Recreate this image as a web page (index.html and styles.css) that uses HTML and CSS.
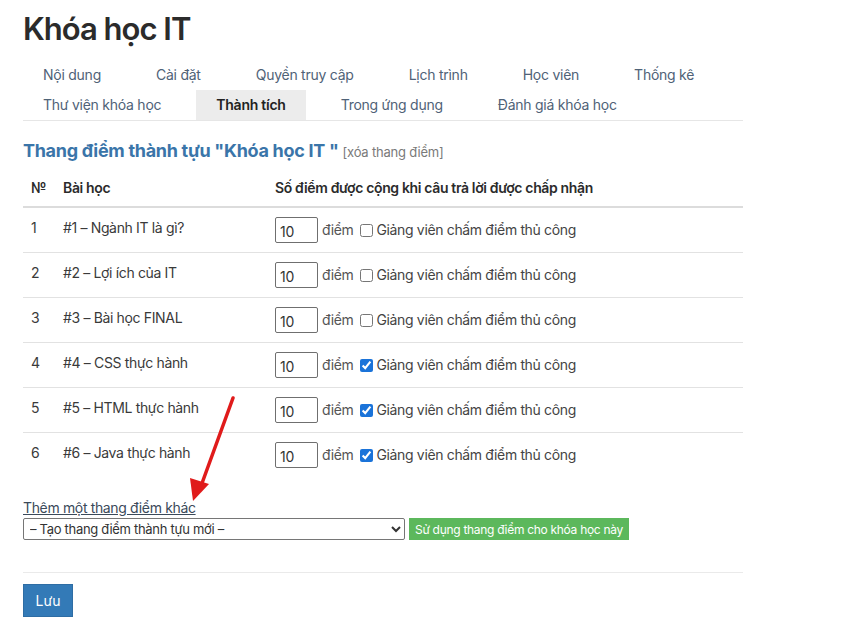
FILE: index.html
```html
<!DOCTYPE html>
<html lang="vi">
<head>
<meta charset="utf-8">
<title>Khóa học IT</title>
<link rel="stylesheet" href="styles.css">
</head>
<body>
<div class="page">
  <h1 class="title">Khóa học IT</h1>
  <nav class="tabs">
    <a class="tab">Nội dung</a>
    <a class="tab">Cài đặt</a>
    <a class="tab">Quyền truy cập</a>
    <a class="tab">Lịch trình</a>
    <a class="tab">Học viên</a>
    <a class="tab">Thống kê</a>
    <a class="tab">Thư viện khóa học</a>
    <a class="tab active">Thành tích</a>
    <a class="tab">Trong ứng dụng</a>
    <a class="tab">Đánh giá khóa học</a>
  </nav>

  <h2 class="heading">Thang điểm thành tựu "Khóa học IT " <span class="del">[xóa thang điểm]</span></h2>

  <table class="grid">
    <thead>
      <tr><th class="c-no">№</th><th class="c-lesson">Bài học</th><th>Số điểm được cộng khi câu trả lời được chấp nhận</th></tr>
    </thead>
    <tbody>
      <tr><td>1</td><td>#1 – Ngành IT là gì?</td><td><div class="pts"><input class="num" type="text" value="10"><span class="unit">điểm</span><label class="chk"><input type="checkbox">Giảng viên chấm điểm thủ công</label></div></td></tr>
      <tr><td>2</td><td>#2 – Lợi ích của IT</td><td><div class="pts"><input class="num" type="text" value="10"><span class="unit">điểm</span><label class="chk"><input type="checkbox">Giảng viên chấm điểm thủ công</label></div></td></tr>
      <tr><td>3</td><td>#3 – Bài học FINAL</td><td><div class="pts"><input class="num" type="text" value="10"><span class="unit">điểm</span><label class="chk"><input type="checkbox">Giảng viên chấm điểm thủ công</label></div></td></tr>
      <tr><td>4</td><td>#4 – CSS thực hành</td><td><div class="pts"><input class="num" type="text" value="10"><span class="unit">điểm</span><label class="chk"><input type="checkbox" checked>Giảng viên chấm điểm thủ công</label></div></td></tr>
      <tr><td>5</td><td>#5 – HTML thực hành</td><td><div class="pts"><input class="num" type="text" value="10"><span class="unit">điểm</span><label class="chk"><input type="checkbox" checked>Giảng viên chấm điểm thủ công</label></div></td></tr>
      <tr class="last"><td>6</td><td>#6 – Java thực hành</td><td><div class="pts"><input class="num" type="text" value="10"><span class="unit">điểm</span><label class="chk"><input type="checkbox" checked>Giảng viên chấm điểm thủ công</label></div></td></tr>
    </tbody>
  </table>

  <div class="other">
    <a class="other-link" href="#">Thêm một thang điểm khác</a>
    <div class="other-row">
      <select class="sel"><option>– Tạo thang điểm thành tựu mới –</option></select>
      <button class="btn-green" type="button">Sử dụng thang điểm cho khóa học này</button>
    </div>
  </div>

  <div class="footer">
    <button class="btn-save" type="button">Lưu</button>
  </div>

  <svg class="arrow" width="80" height="120" viewBox="0 0 80 120">
    <line x1="68" y1="2" x2="36" y2="90" stroke="#e01b1b" stroke-width="3.5" stroke-linecap="round"/>
    <polygon points="28,105 25,82 44,88" fill="#e01b1b"/>
  </svg>
</div>
</body>
</html>
```
FILE: styles.css
```css
* { box-sizing: border-box; }
html, body { margin: 0; padding: 0; background: #fff; }
body {
  font-family: Inter, "Noto Sans", "DejaVu Sans", sans-serif;
  font-size: 14px;
  color: #333;
  letter-spacing: -0.35px;
}
.page {
  position: relative;
  width: 720px;
  margin-left: 23px;
  padding-top: 10px;
}
.title {
  margin: 0;
  font-size: 31px;
  font-weight: 600;
  line-height: 38px;
  color: #2b2b2b;
  letter-spacing: -1px;
}
.tabs {
  display: flex;
  flex-wrap: wrap;
  margin-top: 12px;
  border-bottom: 1px solid #e6e6e6;
}
.tab {
  display: block;
  padding: 0 20px;
  margin-right: 15px;
  height: 30px;
  line-height: 30px;
  color: #4f6277;
  font-size: 14px;
  letter-spacing: -0.25px;
}
.tab.active {
  background: #ececec;
  color: #222;
  font-weight: 600;
}
.heading {
  margin: 19px 0 0;
  font-size: 18px;
  font-weight: 700;
  line-height: 22px;
  color: #3a75a9;
  letter-spacing: -0.3px;
}
.del {
  font-size: 13px;
  font-weight: 400;
  color: #7a7a7a;
  letter-spacing: -0.2px;
}
.grid {
  width: 100%;
  border-collapse: collapse;
  margin-top: 7px;
}
.grid th {
  text-align: left;
  font-weight: 600;
  padding: 8px 8px;
  line-height: 20px;
  border-bottom: 2px solid #dcdcdc;
  color: #2b2b2b;
}
.grid td {
  padding: 10px 8px 9px;
  line-height: 20px;
  vertical-align: top;
  border-bottom: 1px solid #e2e2e2;
  color: #3a3a3a;
}
.grid tr.last td { border-bottom: none; }
.c-no { width: 32px; }
.c-lesson { width: 212px; }
.pts {
  display: flex;
  align-items: center;
  height: 26px;
  margin-top: -1px;
}
.num {
  width: 43px;
  height: 26px;
  border: 1px solid #6f6f6f;
  border-radius: 2px;
  padding: 2px 4px 0;
  font-family: inherit;
  font-size: 14px;
  color: #333;
  letter-spacing: -0.3px;
}
.unit { margin-left: 4px; color: #555; }
.chk {
  display: flex;
  align-items: center;
  margin-left: 7px;
  color: #444;
}
.chk input {
  margin: 0 3px 0 0;
  width: 13px;
  height: 13px;
  accent-color: #1a73d9;
}
.other { margin-top: 22px; }
.other-link {
  color: #3b4a5a;
  text-decoration: underline;
  font-size: 14px;
  line-height: 18px;
}
.other-row {
  display: flex;
  align-items: center;
  margin-top: 1px;
}
.sel {
  width: 382px;
  height: 22px;
  font-family: inherit;
  font-size: 13px;
  letter-spacing: -0.3px;
  color: #333;
  border: 1px solid #767676;
  border-radius: 2px;
  background: #fff;
  padding: 0 2px;
}
.btn-green {
  margin-left: 4px;
  height: 22px;
  padding: 0 6px;
  border: none;
  background: #5cb85c;
  color: #fff;
  font-family: inherit;
  font-size: 12px;
  letter-spacing: -0.3px;
}
.footer {
  margin-top: 32px;
  border-top: 1px solid #eaeaea;
  padding-top: 11px;
}
.btn-save {
  width: 50px;
  height: 33px;
  border: 1px solid #2e6da4;
  background: #337ab7;
  color: #fff;
  font-family: inherit;
  font-size: 14px;
}
.arrow {
  position: absolute;
  left: 142px;
  top: 396px;
}
```
